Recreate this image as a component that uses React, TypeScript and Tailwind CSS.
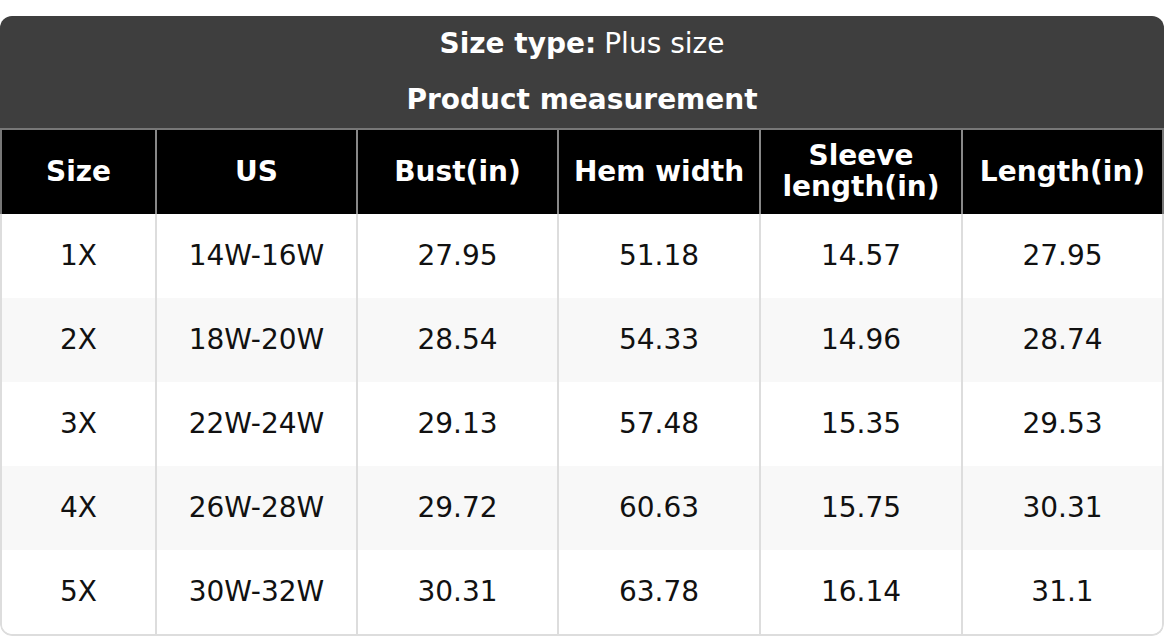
import React from "react";

const headers = ["Size", "US", "Bust(in)", "Hem width", "Sleeve length(in)", "Length(in)"];
const rows = [
  ["1X", "14W-16W", "27.95", "51.18", "14.57", "27.95"],
  ["2X", "18W-20W", "28.54", "54.33", "14.96", "28.74"],
  ["3X", "22W-24W", "29.13", "57.48", "15.35", "29.53"],
  ["4X", "26W-28W", "29.72", "60.63", "15.75", "30.31"],
  ["5X", "30W-32W", "30.31", "63.78", "16.14", "31.1"],
];
const widths = ["w-[153px]", "w-[201px]", "w-[201px]", "w-[202px]", "w-[202px]", "flex-1"];

export default function App() {
  return (
    <div
      className="w-[1164px] h-[636px] bg-white pt-4"
      style={{ fontFamily: '"DejaVu Sans", sans-serif' }}
    >
      <div className="rounded-[12px] overflow-hidden">
        <div className="bg-[#3e3e3e] text-white text-[28px] text-center">
          <div className="h-[56px] flex items-center justify-center">
            <span className="font-bold">Size type:</span>
            <span className="ml-[8px]">Plus size</span>
          </div>
          <div className="h-[56px] flex items-center justify-center font-bold">Product measurement</div>
        </div>
        <div className="h-[2px] bg-[#777]" />
        <div className="flex h-[84px] bg-black text-white font-bold text-[28px] leading-[1.1] border-x-2 border-[#777]">
          {headers.map((h, i) => (
            <div
              key={i}
              className={`${widths[i]} ${i > 0 ? "border-l-2 border-[#888]" : ""} flex items-center justify-center text-center`}
            >
              {h === "Sleeve length(in)" ? (
                <span>
                  Sleeve
                  <br />
                  length(in)
                </span>
              ) : (
                h
              )}
            </div>
          ))}
        </div>
        <div className="border-x-2 border-b-2 border-[#ddd] rounded-b-[12px] overflow-hidden">
          {rows.map((r, ri) => (
            <div
              key={ri}
              className={`flex h-[84px] text-[28px] text-[#111] ${ri % 2 === 1 ? "bg-[#f8f8f8]" : "bg-white"}`}
            >
              {r.map((c, ci) => (
                <div
                  key={ci}
                  className={`${widths[ci]} ${ci > 0 ? "border-l-2 border-[#ddd]" : ""} flex items-center justify-center`}
                >
                  {c}
                </div>
              ))}
            </div>
          ))}
        </div>
      </div>
    </div>
  );
}
